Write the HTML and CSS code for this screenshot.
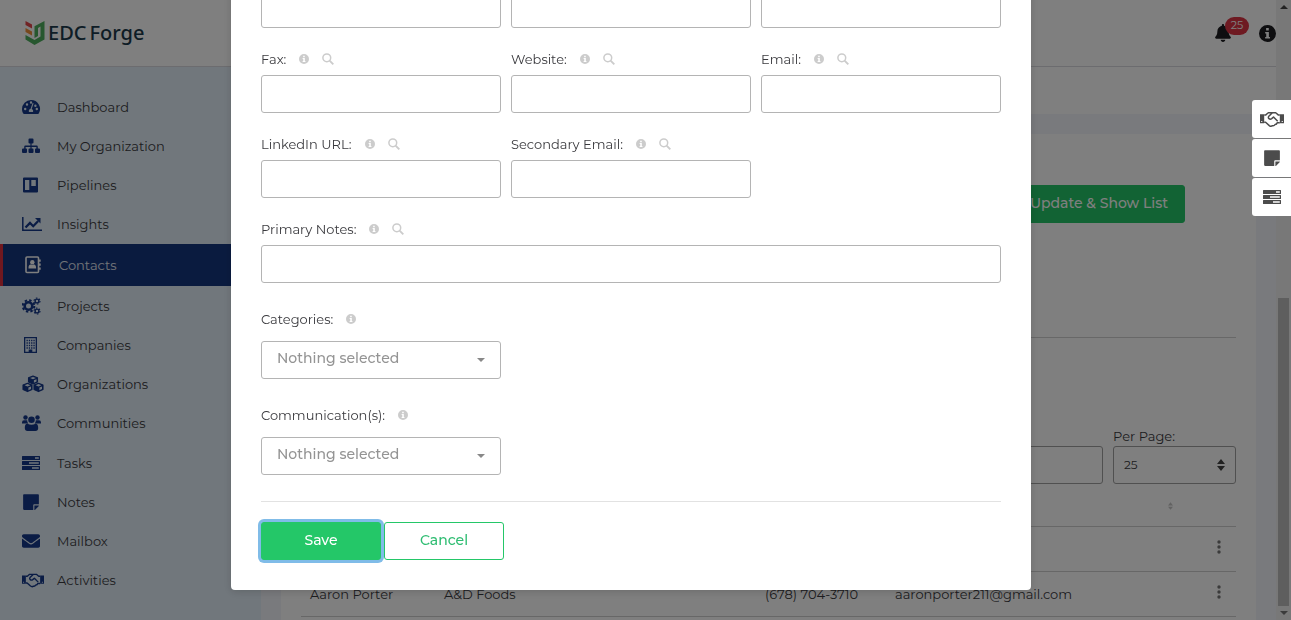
FILE: index.html
```html
<!DOCTYPE html>
<html lang="en">
<head>
    <meta charset="UTF-8">
    <meta name="viewport" content="width=device-width, initial-scale=1.0">
    <title>EDC Forge - Contacts</title>
    <link rel="stylesheet" href="styles.css">
</head>
<body>
    <svg class="sprite" aria-hidden="true">
        <symbol id="i-dashboard" viewBox="0 0 18 18" preserveAspectRatio="xMinYMid">
            <path fill-rule="evenodd" d="M9 2a9 9 0 0 0-9 9c0 1.700.5 3.200 1.200 4.500.2.300.5.500.9.500h13.800c.4 0 .7-.2.9-.5A9 9 0 0 0 9 2zM3.200 12.200a1.200 1.200 0 1 1 0-2.400 1.200 1.200 0 0 1 0 2.400zm1.800-4.500a1.200 1.200 0 1 1 0-2.400 1.200 1.200 0 0 1 0 2.400zM9 3.300a1.200 1.200 0 1 1 0 2.400 1.200 1.200 0 0 1 0-2.400zm2 10.700H7c-.6-1.500.1-3 1.600-3.300l2-5.700 1 .3-1.900 5.800c1.300.6 1.800 1.700 1.300 2.900zm2.400-7.500a1.200 1.200 0 1 1 0 2.400 1.200 1.200 0 0 1 0-2.400zm1.400 5.700a1.200 1.200 0 1 1 0-2.400 1.200 1.200 0 0 1 0 2.400z"/>
        </symbol>
        <symbol id="i-sitemap" viewBox="0 0 18 18" preserveAspectRatio="xMinYMid">
            <path d="M7.500 1.500h3q1 0 1 1v3q0 1-1 1h-.9v2h5q1.200 0 1.200 1.200V11.500H17q1 0 1 1V15q0 1-1 1h-3q-1 0-1-1v-2.500q0-1 1-1h.4V9.900H9.600v1.600h.9q1 0 1 1V15q0 1-1 1h-3q-1 0-1-1v-2.500q0-1 1-1h.9V9.900H3.600v1.600H4q1 0 1 1V15q0 1-1 1H1q-1 0-1-1v-2.500q0-1 1-1h1.200V9.700q0-1.200 1.200-1.200h5v-2h-.9q-1 0-1-1v-3q0-1 1-1z"/>
        </symbol>
        <symbol id="i-board" viewBox="0 0 18 18" preserveAspectRatio="xMinYMid">
            <path fill-rule="evenodd" d="M2 1.500h13q1 0 1 1v13q0 1-1 1H2q-1 0-1-1v-13q0-1 1-1zM3 4v10h4.300V4zm6.300 0v6h4.500V4z"/>
        </symbol>
        <symbol id="i-chart" viewBox="0 0 20 18" preserveAspectRatio="xMinYMid">
            <path d="M.8 2v13.300H20" fill="none" stroke="currentColor" stroke-width="1.500"/>
            <path d="M3.500 12.500L8 8l3.200 3.200 5-5.200" fill="none" stroke="currentColor" stroke-width="2.300"/>
            <path d="M13 3h5.500v5.500z"/>
        </symbol>
        <symbol id="i-book" viewBox="0 0 18 18" preserveAspectRatio="xMinYMid">
            <rect x="2" y="1" width="12.500" height="15.500" rx="1" fill="none" stroke="currentColor" stroke-width="1.600"/>
            <circle cx="8.300" cy="6.300" r="2.200"/>
            <path d="M4.500 12.500c0-4 1.500-4.500 3.800-3.500 2.300-1 3.800-.5 3.800 3.500zM15 3.500h1.700v2.300H15zM15 7.500h1.700v2.300H15zM15 11.500h1.700v2.300H15z"/>
        </symbol>
        <symbol id="i-cogs" viewBox="0 0 20 18" preserveAspectRatio="xMinYMid">
            <g fill="none" stroke="currentColor">
                <circle cx="6.500" cy="9" r="3.800" stroke-width="2.600"/>
                <circle cx="6.500" cy="9" r="5.800" stroke-width="2" stroke-dasharray="2.400 2.155"/>
                <circle cx="15" cy="4" r="1.900" stroke-width="1.400"/>
                <circle cx="15" cy="4" r="3" stroke-width="1.100" stroke-dasharray="1.600 1.542"/>
                <circle cx="15" cy="14" r="1.900" stroke-width="1.400"/>
                <circle cx="15" cy="14" r="3" stroke-width="1.100" stroke-dasharray="1.600 1.542"/>
            </g>
        </symbol>
        <symbol id="i-building" viewBox="0 0 18 18" preserveAspectRatio="xMinYMid">
            <path fill-rule="evenodd" d="M2 1h13v16H2zM3.300 2.300v13.400h3.400V13.500h3.600v2.200h3.400V2.300z"/>
            <path d="M4.500 4.500h8.300M4.500 7h8.300M4.500 9.500h8.300M4.500 12h8.300" stroke="currentColor" stroke-width="1.300" stroke-dasharray="1.300 1"/>
        </symbol>
        <symbol id="i-cubes" viewBox="0 0 22 18" preserveAspectRatio="xMinYMid">
            <g stroke="currentColor" stroke-width="1.100" stroke-linejoin="round">
                <path d="M11 1l4.500 1.800V7L11 9 6.500 7V2.800z"/>
                <path d="M5.500 8.200L10 10v4.500L5.500 16.600 1 14.500V10z"/>
                <path d="M16.500 8.200L21 10v4.500l-4.500 2.100-4.500-2.100V10z"/>
            </g>
            <g class="cube-face">
                <path d="M11 1.900l2.900 1.200L11 4.300 8.100 3.100zM11.900 5.300l2.600-1.100v2.300l-2.600 1.200zM5.500 9.100l2.900 1.200-2.900 1.200-2.900-1.200zM6.400 12.600L9 11.500v2.600l-2.600 1.200zM16.500 9.100l2.900 1.200-2.900 1.200-2.900-1.200zM17.400 12.600l2.600-1.100v2.600l-2.600 1.200z"/>
            </g>
        </symbol>
        <symbol id="i-users" viewBox="0 0 19 18" preserveAspectRatio="xMinYMid">
            <circle cx="3.500" cy="3.500" r="2.200"/>
            <circle cx="15.500" cy="3.500" r="2.200"/>
            <circle cx="9.500" cy="5.800" r="3.300"/>
            <path d="M2 6.300h3.200c0 1.500.5 2.500 1.200 3.200H0V8.500q0-2.200 2-2.200zM17 6.300h-3.200c0 1.500-.5 2.500-1.200 3.200H19V8.500q0-2.200-2-2.200zM5.500 9.800c2.500 1.300 5.500 1.300 8 0 2 0 2.700 1.500 2.700 4.200 0 2-1 3-2.700 3h-8c-1.700 0-2.700-1-2.700-3 0-2.700.7-4.200 2.700-4.200z"/>
        </symbol>
        <symbol id="i-tasks" viewBox="0 0 18 18" preserveAspectRatio="xMinYMid">
            <path fill-rule="evenodd" d="M.5 2h17q.5 0 .5.500v3q0 .5-.5.500H.5Q0 6 0 5.500v-3Q0 2 .5 2zM13 3.200v1.600h3.800V3.200zM.5 7h17q.5 0 .5.500v3q0 .5-.5.500H.5q-.5 0-.5-.5v-3Q0 7 .5 7zM7 8.200v1.600h9.800V8.200zM.5 12h17q.5 0 .5.500v3q0 .5-.5.500H.5q-.5 0-.5-.5v-3q0-.5.500-.5zM10 13.200v1.600h6.800v-1.600z"/>
        </symbol>
        <symbol id="i-note" viewBox="-32 0 512 512" preserveAspectRatio="xMinYMid">
            <path d="M312 320h136V56c0-13.300-10.700-24-24-24H24C10.700 32 0 42.700 0 56v400c0 13.300 10.700 24 24 24h264V344c0-13.200 10.800-24 24-24zm129 55l-98 98c-4.500 4.500-10.600 7-17 7h-6V352h128v6.100c0 6.300-2.500 12.400-7 16.900z"/>
        </symbol>
        <symbol id="i-mail" viewBox="0 0 512 512" preserveAspectRatio="xMinYMid">
            <path d="M502.300 190.800c3.900-3.100 9.700-.2 9.700 4.700V400c0 26.500-21.500 48-48 48H48c-26.500 0-48-21.500-48-48V195.600c0-5 5.700-7.800 9.700-4.700 22.400 17.400 52.100 39.500 154.100 113.600 21.100 15.400 56.700 47.800 92.200 47.600 35.700.3 72-32.800 92.300-47.600 102-74.100 131.600-96.300 154-113.700zM256 320c23.200.4 56.600-29.200 73.400-41.400 132.700-96.300 142.800-104.700 173.400-128.700 5.800-4.500 9.200-11.500 9.200-18.900v-19c0-26.500-21.500-48-48-48H48c-26.500 0-48 21.500-48 48v19c0 7.400 3.400 14.300 9.200 18.900 30.600 23.900 40.700 32.400 173.400 128.700 16.800 12.200 50.200 41.800 73.400 41.400z"/>
        </symbol>
        <symbol id="i-handshake" viewBox="0 0 24 18" preserveAspectRatio="xMinYMid">
            <path fill-rule="evenodd" d="M0 4.200h4.200v9H0zM1.200 11v1.100h1.100V11zM19.800 4.200H24v9h-4.200zM21.700 11v1.100h1.100V11z"/>
            <path d="M4.200 4.900h1.600L8.300 2.800h7.400l2.500 2.100h1.600M4.200 12.300h1.400l3.700 3.300q1.700 1.300 3.200.1 1.700.3 2.500-1.200 1.700.1 2.200-1.700h2.600M12.200 3L9 6q-1.300 1.500 0 2.600t2.700 0L13.500 7l4.200 4.300" fill="none" stroke="currentColor" stroke-width="1.500" stroke-linejoin="round"/>
        </symbol>
        <symbol id="i-bell" viewBox="0 0 448 512">
            <path d="M224 512c35.320 0 63.970-28.650 63.970-64H160.030c0 35.350 28.650 64 63.970 64zm215.390-149.710c-19.320-20.760-55.470-51.990-55.470-154.290 0-77.700-54.480-139.900-127.940-155.160V32c0-17.670-14.320-32-31.980-32s-31.980 14.330-31.980 32v20.840C118.560 68.100 64.080 130.300 64.080 208c0 102.300-36.150 133.530-55.470 154.290-6 6.450-8.660 14.160-8.610 21.710.11 16.400 12.980 32 32.100 32h383.800c19.120 0 32-15.600 32.100-32 .05-7.550-2.610-15.270-8.610-21.710z"/>
        </symbol>
        <symbol id="i-info" viewBox="0 0 16 16">
            <path fill-rule="evenodd" d="M8 0a8 8 0 1 1 0 16A8 8 0 0 1 8 0zM6.700 2.800v2.400h2.500V2.800zM5.800 6.500v1.400h1v3.400h-1v1.400h4.500v-1.400h-1V6.500z"/>
        </symbol>
        <symbol id="i-search" viewBox="0 0 12 12">
            <circle cx="4.800" cy="4.800" r="3.900" fill="none" stroke="currentColor" stroke-width="1.500"/>
            <path d="M7.600 7.600l3.700 3.700" stroke="currentColor" stroke-width="1.900"/>
        </symbol>
        <symbol id="i-sort" viewBox="0 0 8 12">
            <path d="M0 5l4-5 4 5zM0 7h8l-4 5z"/>
        </symbol>
        <symbol id="i-dots" viewBox="0 0 4 14">
            <circle cx="2" cy="2" r="1.700"/><circle cx="2" cy="7" r="1.700"/><circle cx="2" cy="12" r="1.700"/>
        </symbol>
    </svg>

    <div class="page">
        <header class="header">
            <a href="#" class="logo">
                <svg class="logo-mark" viewBox="0 0 20 26" aria-hidden="true">
                    <path fill="#e2474b" d="M.5 1L7 4.500v4L.5 5z"/>
                    <path fill="#f0913a" d="M.5 8L7 11.500v4L.5 12z"/>
                    <path fill="#4fae5e" d="M.5 15L9.500 20l6-3.500V6.500l-2.500 1.400v8L9.500 18V6.300L19.500 1v18.500l-10 5.500-9-5.500z"/>
                </svg>
                <span>EDC</span><span>Forge</span>
            </a>
            <div class="header-tools">
                <a href="#" class="bell" aria-label="Notifications"><svg class="bell-icon"><use href="#i-bell"/></svg><span class="badge">25</span></a>
                <a href="#" class="help" aria-label="Help"><svg class="help-icon"><use href="#i-info"/></svg></a>
            </div>
        </header>

        <div class="layout">
            <nav class="sidebar">
                <a href="#" class="nav-item"><svg class="nav-icon"><use href="#i-dashboard"/></svg>Dashboard</a>
                <a href="#" class="nav-item"><svg class="nav-icon"><use href="#i-sitemap"/></svg>My Organization</a>
                <a href="#" class="nav-item"><svg class="nav-icon"><use href="#i-board"/></svg>Pipelines</a>
                <a href="#" class="nav-item"><svg class="nav-icon"><use href="#i-chart"/></svg>Insights</a>
                <a href="#" class="nav-item active"><svg class="nav-icon"><use href="#i-book"/></svg>Contacts</a>
                <a href="#" class="nav-item"><svg class="nav-icon"><use href="#i-cogs"/></svg>Projects</a>
                <a href="#" class="nav-item"><svg class="nav-icon"><use href="#i-building"/></svg>Companies</a>
                <a href="#" class="nav-item"><svg class="nav-icon"><use href="#i-cubes"/></svg>Organizations</a>
                <a href="#" class="nav-item"><svg class="nav-icon"><use href="#i-users"/></svg>Communities</a>
                <a href="#" class="nav-item"><svg class="nav-icon"><use href="#i-tasks"/></svg>Tasks</a>
                <a href="#" class="nav-item"><svg class="nav-icon"><use href="#i-note"/></svg>Notes</a>
                <a href="#" class="nav-item"><svg class="nav-icon"><use href="#i-mail"/></svg>Mailbox</a>
                <a href="#" class="nav-item"><svg class="nav-icon"><use href="#i-handshake"/></svg>Activities</a>
            </nav>

            <main class="content">
                <div class="title-bar"></div>
                <section class="panel">
                    <div class="panel-actions">
                        <button type="button" class="btn btn-green">Update &amp; Show List</button>
                    </div>
                    <hr class="rule">
                    <div class="filters">
                        <input type="text" class="input search-input" aria-label="Search">
                        <div class="per-page">
                            <label for="perPage">Per Page:</label>
                            <div class="select-wrap">
                                <select id="perPage" class="input per-page-select"><option>25</option></select>
                                <svg class="sort-icon"><use href="#i-sort"/></svg>
                            </div>
                        </div>
                    </div>
                    <table class="contacts">
                        <colgroup><col class="col-name"><col class="col-company"><col class="col-phone"><col class="col-email"><col class="col-menu"></colgroup>
                        <thead>
                            <tr><th></th><th></th><th></th><th class="sort-cell"><svg class="sort-small"><use href="#i-sort"/></svg></th><th></th></tr>
                        </thead>
                        <tbody>
                            <tr><td></td><td></td><td></td><td></td><td class="menu-cell"><svg class="dots"><use href="#i-dots"/></svg></td></tr>
                            <tr><td>Aaron Porter</td><td>A&amp;D Foods</td><td>(678) 704-3710</td><td>aaronporter211@gmail.com</td><td class="menu-cell"><svg class="dots"><use href="#i-dots"/></svg></td></tr>
                        </tbody>
                    </table>
                </section>
            </main>
        </div>
    </div>

    <div class="scrollbar" aria-hidden="true">
        <span class="arrow-up"></span>
        <span class="thumb"></span>
        <span class="arrow-down"></span>
    </div>

    <div class="overlay">
        <form class="modal">
            <div class="form-grid">
                <div class="field"><input type="text" class="input" aria-label="Phone"></div>
                <div class="field"><input type="text" class="input" aria-label="Mobile"></div>
                <div class="field"><input type="text" class="input" aria-label="Office"></div>

                <div class="field">
                    <div class="label-row"><label for="fax">Fax:</label><svg class="info"><use href="#i-info"/></svg><svg class="lookup"><use href="#i-search"/></svg></div>
                    <input type="text" id="fax" class="input">
                </div>
                <div class="field">
                    <div class="label-row"><label for="website">Website:</label><svg class="info"><use href="#i-info"/></svg><svg class="lookup"><use href="#i-search"/></svg></div>
                    <input type="text" id="website" class="input">
                </div>
                <div class="field">
                    <div class="label-row"><label for="email">Email:</label><svg class="info"><use href="#i-info"/></svg><svg class="lookup"><use href="#i-search"/></svg></div>
                    <input type="text" id="email" class="input">
                </div>

                <div class="field">
                    <div class="label-row"><label for="linkedin">LinkedIn URL:</label><svg class="info"><use href="#i-info"/></svg><svg class="lookup"><use href="#i-search"/></svg></div>
                    <input type="text" id="linkedin" class="input">
                </div>
                <div class="field">
                    <div class="label-row"><label for="email2">Secondary Email:</label><svg class="info"><use href="#i-info"/></svg><svg class="lookup"><use href="#i-search"/></svg></div>
                    <input type="text" id="email2" class="input">
                </div>

                <div class="field field-wide">
                    <div class="label-row"><label for="notes">Primary Notes:</label><svg class="info"><use href="#i-info"/></svg><svg class="lookup"><use href="#i-search"/></svg></div>
                    <input type="text" id="notes" class="input">
                </div>
            </div>

            <div class="picker">
                <div class="label-row"><label for="categories">Categories:</label><svg class="info"><use href="#i-info"/></svg></div>
                <div class="select-wrap caret"><select id="categories" class="input picker-select"><option>Nothing selected</option></select></div>
            </div>
            <div class="picker">
                <div class="label-row"><label for="communications">Communication(s):</label><svg class="info"><use href="#i-info"/></svg></div>
                <div class="select-wrap caret"><select id="communications" class="input picker-select"><option>Nothing selected</option></select></div>
            </div>

            <div class="modal-footer">
                <button type="button" class="btn btn-green btn-save">Save</button>
                <button type="button" class="btn btn-outline">Cancel</button>
            </div>
        </form>
    </div>

    <div class="side-tabs">
        <button type="button" class="side-tab" aria-label="Add activity"><svg class="tab-icon tab-icon-wide"><use href="#i-handshake"/></svg></button>
        <button type="button" class="side-tab" aria-label="Add note"><svg class="tab-icon"><use href="#i-note"/></svg></button>
        <button type="button" class="side-tab" aria-label="Add task"><svg class="tab-icon"><use href="#i-tasks"/></svg></button>
    </div>
</body>
</html>
```

FILE: styles.css
```css
* { box-sizing: border-box; margin: 0; padding: 0; }
body {
    font-family: Montserrat, Inter, "Liberation Sans", sans-serif;
    font-size: 13px;
    line-height: 20px;
    color: #3a3a3e;
    background-color: #fff;
    height: 100vh;
    overflow: hidden;
}
a {
    color: inherit;
    text-decoration: none;
}
svg {
    fill: currentColor;
    flex: none;
}
button, input, select {
    font: inherit;
    color: inherit;
}
.sprite {
    position: absolute;
    width: 0;
    height: 0;
}

/* page behind the modal */
.page {
    height: 100vh;
    margin-right: 15px;
    display: flex;
    flex-direction: column;
}
.header {
    flex: none;
    display: flex;
    justify-content: space-between;
    align-items: center;
    height: 67px;
    padding: 0 0 0 25px;
    border-bottom: 1px solid #d9d9de;
}
.logo {
    display: flex;
    align-items: center;
    gap: 3px;
    color: #1c3a4c;
    font-family: "Noto Sans", "Open Sans", sans-serif;
    font-size: 20px;
    font-weight: 500;
}
.logo-mark {
    width: 20px;
    height: 26px;
}
.header-tools {
    display: flex;
    align-items: center;
    color: #1c1c20;
}
.bell {
    position: relative;
    display: flex;
    margin-right: 28px;
}
.bell-icon {
    width: 16px;
    height: 18px;
}
.badge {
    position: absolute;
    left: 10px;
    top: -7px;
    width: 24px;
    height: 18px;
    border-radius: 9px;
    background-color: #dc3545;
    color: #fff;
    font-size: 11px;
    line-height: 17px;
    text-align: center;
}
.help {
    display: flex;
}
.help-icon {
    width: 17px;
    height: 17px;
}
.layout {
    flex: 1;
    min-height: 0;
    display: flex;
}
.sidebar {
    flex: none;
    width: 261px;
    padding: 20px 0;
    display: flex;
    flex-direction: column;
    background-color: #e3eff8;
}
.nav-item {
    flex: 1;
    max-height: 42px;
    display: flex;
    align-items: center;
    gap: 13px;
    padding-left: 22px;
}
.nav-icon {
    width: 22px;
    height: 18px;
    color: #15388a;
}
.cube-face {
    fill: #e3eff8;
}
.nav-item.active {
    flex: none;
    height: 42px;
    padding-left: 21px;
    border-left: 3px solid #e0303f;
    background-color: #15377f;
    color: #e4e8f0;
}
.nav-item.active .nav-icon {
    color: #fff;
}
.content {
    flex: 1;
    min-width: 0;
    display: flex;
    flex-direction: column;
    background-color: #f3f4fa;
}
.title-bar {
    flex: none;
    height: 47px;
    background-color: #fff;
}
.panel {
    flex: 1;
    margin: 20px 20px 0;
    padding: 51px 20px 0;
    background-color: #fff;
}
.panel-actions {
    display: flex;
    justify-content: flex-end;
    padding-right: 51px;
}
.rule {
    margin-top: 114px;
    border: 0;
    border-top: 1px solid #d0d0d0;
}
.filters {
    display: flex;
    align-items: flex-end;
    gap: 10px;
    margin-top: 88px;
}
.search-input {
    flex: 1;
}
.per-page {
    width: 123px;
}
.per-page label {
    display: block;
}
.contacts {
    width: 100%;
    border-collapse: collapse;
    table-layout: fixed;
}
.contacts th, .contacts td {
    height: 45px;
    padding-left: 9px;
    border-bottom: 1px solid #cfcfcf;
    text-align: left;
    white-space: nowrap;
}
.contacts th {
    height: 42px;
}
.col-name { width: 134px; }
.col-company { width: 321px; }
.col-phone { width: 130px; }
.col-menu { width: 55px; }
.contacts .sort-cell {
    text-align: right;
    padding-right: 8px;
    color: #c4c4c4;
}
.sort-small {
    width: 5px;
    height: 8px;
}
.contacts .menu-cell {
    padding: 0 0 4px 36px;
    color: #777;
}
.dots {
    display: block;
    width: 4px;
    height: 14px;
}

.scrollbar {
    position: fixed;
    top: 0;
    right: 0;
    bottom: 0;
    width: 15px;
    padding: 5px 2px;
    display: flex;
    flex-direction: column;
    align-items: center;
    background-color: #f1f1f1;
}
.thumb {
    width: 11px;
    height: 308px;
    margin: auto 0 5px;
    background-color: #bcbcbc;
}
.arrow-up, .arrow-down {
    border: 4px solid transparent;
}
.arrow-up {
    border-top: 0;
    border-bottom-color: #444;
}
.arrow-down {
    border-bottom: 0;
    border-top-color: #777;
}

/* form controls */
.input {
    width: 100%;
    height: 38px;
    padding: 0 15px;
    border: 1px solid #b4b4b4;
    border-radius: 3px;
    background-color: #fff;
}
.select-wrap {
    position: relative;
}
.select-wrap select {
    appearance: none;
}
.per-page .input, .search-input {
    border-color: #a0a0a0;
}
.per-page .per-page-select {
    padding: 0 10px;
    font-size: 12px;
}
.sort-icon {
    position: absolute;
    right: 11px;
    top: 13px;
    width: 8px;
    height: 12px;
    color: #444;
}
.btn {
    height: 38px;
    padding: 0 16px 2px;
    border: 1px solid #24c768;
    border-radius: 3px;
    font-size: 14px;
    font-weight: 500;
    cursor: pointer;
}
.btn-green {
    background-color: #24c768;
    color: #fff;
}
.btn-outline {
    background-color: #fff;
    color: #2fbd72;
}

/* modal */
.overlay {
    position: fixed;
    inset: 0;
    display: flex;
    justify-content: center;
    align-items: flex-end;
    padding: 0 29px 30px 0;
    background-color: rgba(0, 0, 0, 0.5);
}
.modal {
    width: 100%;
    max-width: 800px;
    padding: 30px;
    border-radius: 4px;
    background-color: #fff;
    box-shadow: 0 2px 8px rgba(0, 0, 0, 0.15);
}
.form-grid {
    display: grid;
    grid-template-columns: repeat(3, 1fr);
    gap: 21px 10px;
    margin-bottom: 26px;
}
.field {
    display: flex;
    flex-direction: column;
    gap: 6px;
}
.field-wide {
    grid-column: 1 / -1;
}
.label-row {
    display: flex;
    align-items: center;
}
.info {
    width: 10px;
    height: 10px;
    margin-left: 13px;
    color: #ccc;
}
.lookup {
    width: 12px;
    height: 12px;
    margin-left: 13px;
    color: #ccc;
}
.picker {
    display: flex;
    flex-direction: column;
    gap: 12px;
    width: 240px;
    margin-bottom: 26px;
}
.picker-select {
    padding-bottom: 4px;
    color: #949494;
    font-size: 14px;
    font-weight: 500;
}
.caret::after {
    content: "";
    position: absolute;
    right: 16px;
    top: 17px;
    border: 4px solid transparent;
    border-bottom: 0;
    border-top-color: #888;
}
.modal-footer {
    display: flex;
    gap: 3px;
    padding-top: 20px;
    border-top: 1px solid #e2e2e2;
}
.modal-footer .btn {
    width: 120px;
}
.btn-save {
    box-shadow: 0 0 0 3px #80bce8;
}

.side-tabs {
    position: fixed;
    top: 100px;
    right: 0;
    display: flex;
    flex-direction: column;
    gap: 1px;
}
.side-tab {
    display: flex;
    justify-content: center;
    align-items: center;
    width: 39px;
    height: 38px;
    border: 0;
    border-radius: 3px 0 0 3px;
    background-color: #fff;
    color: #4c4c4c;
}
.tab-icon {
    width: 18px;
    height: 18px;
}
.tab-icon-wide {
    width: 24px;
}
```
